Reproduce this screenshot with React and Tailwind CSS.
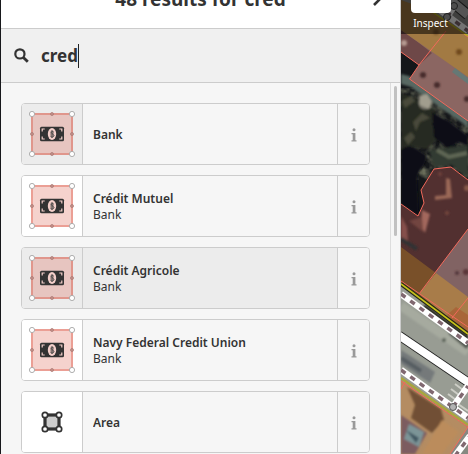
import React, { useState } from 'react';

const presets = [
  { id: 'amenity/bank', name: 'Bank', icon: 'bank', focused: true },
  { id: 'amenity/bank/credit-mutuel', name: 'Crédit Mutuel', type: 'Bank', icon: 'bank' },
  { id: 'amenity/bank/credit-agricole', name: 'Crédit Agricole', type: 'Bank', icon: 'bank', hovered: true },
  { id: 'amenity/bank/navy-federal', name: 'Navy Federal Credit Union', type: 'Bank', icon: 'bank' },
  { id: 'area', name: 'Area', icon: 'area' },
];

const corners = [[10, 10], [50, 10], [50, 50], [10, 50]];
const midpoints = [[30, 10], [50, 30], [30, 50], [10, 30]];

const BankIcon = ({ shaded }) => (
  <svg viewBox="0 0 60 60" className="size-15" aria-hidden="true">
    <rect
      x="10"
      y="10"
      width="40"
      height="40"
      strokeWidth="2"
      className={shaded ? 'fill-[#e7c5c0] stroke-[#e0968c]' : 'fill-[#f5d2cd] stroke-[#eb9f95]'}
    />
    {midpoints.map(([x, y]) => (
      <circle key={`${x}-${y}`} cx={x} cy={y} r="1.5" fill="#c48f89" stroke="#a87570" strokeWidth="0.7" />
    ))}
    {corners.map(([x, y]) => (
      <circle key={`${x}-${y}`} cx={x} cy={y} r="2.6" fill="#fff" stroke="#a6a6a6" strokeWidth="0.9" />
    ))}
    <rect x="18" y="22.8" width="24" height="14.5" rx="1.5" fill="#333" />
    <ellipse cx="30" cy="30" rx="4.2" ry="6" fill="#f3cfca" />
    <ellipse cx="30" cy="30" rx="2" ry="3.7" fill="#b89d99" />
    <path d="M31.6 28c-1.6-1.4-3.3.3-1.6 1.6s2.7 1.600 1.500 2.900c-.9.9-2.100.7-2.900 0M30 26.300v7.400" fill="none" stroke="#444" strokeWidth="0.9" />
    <path
      d="M20.2 27.500v-2.500h2.500M37.300 25h2.500v2.500M20.200 32.500v2.500h2.500M37.300 35h2.500v-2.500"
      fill="none"
      stroke="#f3cfca"
      strokeWidth="1.2"
    />
  </svg>
);

const AreaIcon = () => (
  <svg viewBox="0 0 60 60" className="size-15" aria-hidden="true">
    <rect x="23" y="23" width="14" height="14" fill="#ccc" stroke="#333" strokeWidth="3.2" />
    {[[23, 23], [37, 23], [37, 37], [23, 37]].map(([x, y]) => (
      <circle key={`${x}-${y}`} cx={x} cy={y} r="2.7" fill="#fff" stroke="#333" strokeWidth="1.7" />
    ))}
  </svg>
);

const InfoIcon = () => (
  <svg viewBox="0 0 6 14" className="h-3.5 w-1.5 fill-[#999]" aria-hidden="true">
    <circle cx="3" cy="1.8" r="1.5" />
    <path d="M.5 5h3.900v7.200h1.100v1.200H.5v-1.200h1.200V6.200H.5z" />
  </svg>
);

const SearchIcon = () => (
  <svg viewBox="0 0 15 15" className="size-[15px] shrink-0" fill="none" stroke="#333" aria-hidden="true">
    <circle cx="5.9" cy="5.9" r="4.6" strokeWidth="2.2" />
    <path d="M9.4 9.4l4.4 4.4" strokeWidth="2.8" />
  </svg>
);

const PresetItem = ({ preset }) => {
  const shaded = preset.focused || preset.hovered;
  return (
    <li className="flex h-[62px] shrink-0 overflow-hidden rounded border border-[#ccc]">
      <button
        type="button"
        className={`flex min-w-0 flex-1 text-left ${preset.hovered ? 'bg-[#ececec]' : 'bg-[#f6f6f6]'}`}
      >
        <span className={`h-full shrink-0 ${shaded ? 'bg-[#ececec]' : 'bg-white'}`}>
          {preset.icon === 'bank' ? <BankIcon shaded={shaded} /> : <AreaIcon />}
        </span>
        <span className="flex h-full min-w-0 flex-1 flex-col justify-center border-l border-[#ccc] pt-0.5 pl-2.5">
          <span className="truncate font-semibold">{preset.name}</span>
          {preset.type && <span>{preset.type}</span>}
        </span>
      </button>
      <button
        type="button"
        aria-label={`About ${preset.name}`}
        className="flex w-8 shrink-0 items-center justify-center border-l border-[#ccc] bg-[#f6f6f6] pt-0.5"
      >
        <InfoIcon />
      </button>
    </li>
  );
};

const Footway = ({ d }) => (
  <>
    <path d={d} stroke="#fff" strokeWidth="6.5" fill="none" />
    <path d={d} stroke="#806870" strokeWidth="3.5" strokeDasharray="5.5 6" fill="none" />
  </>
);

const MapView = () => (
  <svg
    viewBox="0 0 67 454"
    preserveAspectRatio="xMinYMin slice"
    className="absolute inset-0 size-full"
    role="img"
    aria-label="Map"
  >
    <defs>
      <filter id="soft" x="-20%" y="-20%" width="140%" height="140%">
        <feGaussianBlur stdDeviation="1.3" />
      </filter>
      <filter id="grain" x="0" y="0" width="100%" height="100%">
        <feTurbulence type="fractalNoise" baseFrequency="0.09" numOctaves="3" seed="4" />
        <feColorMatrix values="0 0 0 0 0.14  0 0 0 0 0.15  0 0 0 0 0.1  1.6 1.6 0 0 -1.35" />
      </filter>
    </defs>

    {/* trees and shadow */}
    <rect width="67" height="454" fill="#15171a" />
    <rect y="88" width="67" height="92" filter="url(#grain)" />
    <g filter="url(#soft)">
      <path d="M0 74l8 2 59 42v9L10 87 0 84z" fill="#596762" />
      <path d="M0 93l15 5 20 14-4 12 6 15-11 10-20-3-6 5z" fill="#282b23" />
      <path d="M1 101l9-5 4 5-10 7zM12 122l9-9 8 5-10 4-4 9zM3 138l7-6 4 5-7 8z" fill="#484a3b" />
      <circle cx="24" cy="103" r="6.5" fill="#77756a" />
      <path d="M18 96l8-2 5 8-3 7-9-4z" fill="#a19d8e" />
      <path d="M31 112l18 10 18 14v10l-10-4-10 7-14-12z" fill="#0b0d15" />
      <path d="M0 150c9-8 14-2 25 5 2 9-7 13-9 23L18 216 0 204z" fill="#090a12" />
      <path d="M28 150l39-5v33l-16-13-18 2z" fill="#333b30" />
      <path d="M36 150l12 7 18-4" stroke="#5e6654" strokeWidth="4" fill="none" />
    </g>

    {/* northern building */}
    <path d="M0 0h67v121L8.5 79 18 65 0 52z" fill="#8b6662" />
    <path d="M0 30l18 13 13 10L18 65 0 52z" fill="#6e4848" />
    <path d="M0 0h34l33 37v40L0 30z" fill="#a27a43" />
    <path d="M0 0h67v37L33 12z" fill="#8d8d89" />
    <path d="M54 68l13 10v6L51 72z" fill="#657875" />
    <g filter="url(#soft)" fill="#472c2b">
      <circle cx="22" cy="75" r="3" />
      <circle cx="36" cy="85" r="3" />
      <circle cx="66" cy="99" r="3" />
      <circle cx="58" cy="52" r="3" fill="#70491f" />
      <circle cx="35" cy="32" r="3" fill="#7b572f" />
      <circle cx="3" cy="43" r="3" fill="#b69a91" />
    </g>
    <path d="M0 52l18 13L45 31M18 65L8.5 79 67 121M45 20l22 17" fill="none" stroke="#f2695b" />
    <path d="M30 11l37 25" stroke="#b5b119" strokeWidth="1.5" />
    <path d="M49 0l18 15" stroke="#333" strokeWidth="11" />
    <path d="M49 0l18 15" stroke="#bbb" strokeWidth="9" />
    <Footway d="M36 8l31 23M46 17l8-12" />
    <circle cx="46" cy="17" r="3.5" fill="#aaa" stroke="#444" />
    <circle cx="53" cy="6" r="3.5" fill="#aaa" stroke="#444" />

    {/* dark red building */}
    <path d="M0 204l17 12 6-13-3-13 13-21 17-2 17 13v120H0z" fill="#523030" />
    <path d="M67 229v75L18 294z" fill="#816363" />
    <g filter="url(#soft)">
      <path d="M45 178l4 1 2 19-17 2v-4l11-1z" fill="#9a6757" />
      <path d="M21 210l8 4-5 19-4-7z" fill="#a3685d" />
      <path d="M8 221l13-4 1 15z" fill="#72443f" />
      <path d="M0 216l6 11 1 15-7-4z" fill="#85504b" />
      <path d="M0 239l16 10" stroke="#303334" strokeWidth="4" />
      <circle cx="39" cy="174" r="2" fill="#6f423c" />
      <circle cx="46" cy="213" r="2" fill="#75473e" />
      <circle cx="66" cy="188" r="3" fill="#85584a" />
      <circle cx="56" cy="273" r="2" fill="#513436" />
      <circle cx="65" cy="272" r="3" fill="#5a3638" />
    </g>
    <path d="M0 247l35 26-17 21 49 34v10L0 284z" fill="#795029" />
    <path d="M35 273l32 24v36L18 294z" fill="#a87c49" />
    <path d="M46 315l9-8 12 8v22z" fill="#a86639" />
    <path
      d="M0 204l17 12 6-13-3-13 13-21 17-2 17 13M67 229L18 294M0 281l67 46M51 318l16-20"
      fill="none"
      stroke="#f2695b"
    />

    {/* street */}
    <path d="M0 283l67 52v92L0 381z" fill="#989c93" />
    <g filter="url(#soft)">
      <path d="M0 350l34 22-5 11L0 364z" fill="#74797a" />
      <path d="M0 358l20 13" stroke="#565d62" strokeWidth="4" />
      <path d="M0 306l67 46" stroke="#a6aa9f" strokeWidth="9" />
      <path d="M49 332l18 15" stroke="#4d534c" strokeWidth="5" />
      <circle cx="43" cy="340" r="2" fill="#596057" />
      <path d="M23 306l44 32" stroke="#292b23" strokeWidth="4" />
    </g>
    <path d="M50 389l12 9M54 384l12 9M47 394l12 9M57 404l10 7" stroke="#cdcec6" strokeWidth="2" />
    <path d="M0 284l67 50" stroke="#252817" strokeWidth="4" />
    <path d="M0 284l67 50" stroke="#c7c21b" strokeWidth="1.8" />
    <Footway d="M0 294l67 49" />
    <path d="M-2 335.500l71 48" stroke="#222" strokeWidth="9.5" />
    <path d="M-2 335.500l71 48" stroke="#fff" strokeWidth="7.8" />

    {/* southern building */}
    <path d="M0 380l67 47v27H0z" fill="#b48c62" />
    <g filter="url(#soft)">
      <path d="M6 387l34 22 3 11-12 13-21-15 4-13z" fill="#715035" />
      <path d="M0 415l26 18-12 21H0z" fill="#7b5b61" />
      <path d="M8 424l15 8-5 15-15-8z" fill="#7c9497" />
      <path d="M5 430l13 8-3 5z" fill="#415661" />
      <path d="M41 420l17 12-17 22H21z" fill="#bb8c5c" />
    </g>
    <path d="M67 427v27H49z" fill="#868981" />
    <path d="M0 378l67 47" stroke="#aaa53d" strokeWidth="2.5" />
    <path d="M0 381l67 46-18 27M4 382l-4 7" fill="none" stroke="#f2695b" />
    <Footway d="M0 370l67 48M52 407l15-21M54 456l15-20" />
    <circle cx="52" cy="407" r="3.5" fill="#b3b3b3" stroke="#555" />
  </svg>
);

const App = () => {
  const [search, setSearch] = useState('cred');

  return (
    <div className="flex h-screen overflow-hidden bg-[#17181b] font-['Noto_Sans',sans-serif] text-xs leading-4 text-[#333]">
      <aside className="ml-px flex min-w-0 flex-1 flex-col border-r border-[#ccc] bg-[#f6f6f6]">
        <header className="relative flex h-[29px] shrink-0 items-end justify-center border-b border-[#ccc] bg-white pb-[17px]">
          <h2 className="text-[19px] leading-6 font-bold">48 results for cred</h2>
          <button type="button" aria-label="Close" className="absolute right-4 bottom-[22px]">
            <svg viewBox="0 0 12 18" className="h-[18px] w-3" fill="none" stroke="#333" strokeWidth="2.6">
              <path d="M2 1l8 8-8 8" />
            </svg>
          </button>
        </header>

        <label className="flex h-[54px] shrink-0 items-center border-b border-[#ccc] bg-[#f0f0f0] pl-[13px]">
          <SearchIcon />
          <input
            type="text"
            aria-label="Search"
            value={search}
            onChange={(e) => setSearch(e.target.value)}
            className="ml-3 field-sizing-content h-8 text-[17px] font-bold outline-none"
          />
          <span className="h-6 w-px bg-[#222]"></span>
        </label>

        <div className="flex min-h-0 flex-1">
          <ul className="flex min-w-0 flex-1 flex-col gap-2.5 overflow-hidden p-5">
            {presets.map((preset) => (
              <PresetItem key={preset.id} preset={preset} />
            ))}
          </ul>
          <div className="w-2.5 shrink-0 border-l border-[#ddd] pt-[3px] pl-[3px]">
            <div className="h-[150px] w-[3px] rounded-full bg-[#c1c1c1]"></div>
          </div>
        </div>
      </aside>

      <main className="relative w-[67px] shrink-0 overflow-hidden">
        <MapView />
        <div className="relative flex h-[34px] flex-col items-center bg-black/55 pr-2">
          <button type="button" className="flex flex-col items-center text-[10px] text-white">
            <span className="h-[13px] w-10 rounded-b bg-white"></span>
            <span className="pt-0.5">Inspect</span>
          </button>
        </div>
      </main>
    </div>
  );
};

export default App;
